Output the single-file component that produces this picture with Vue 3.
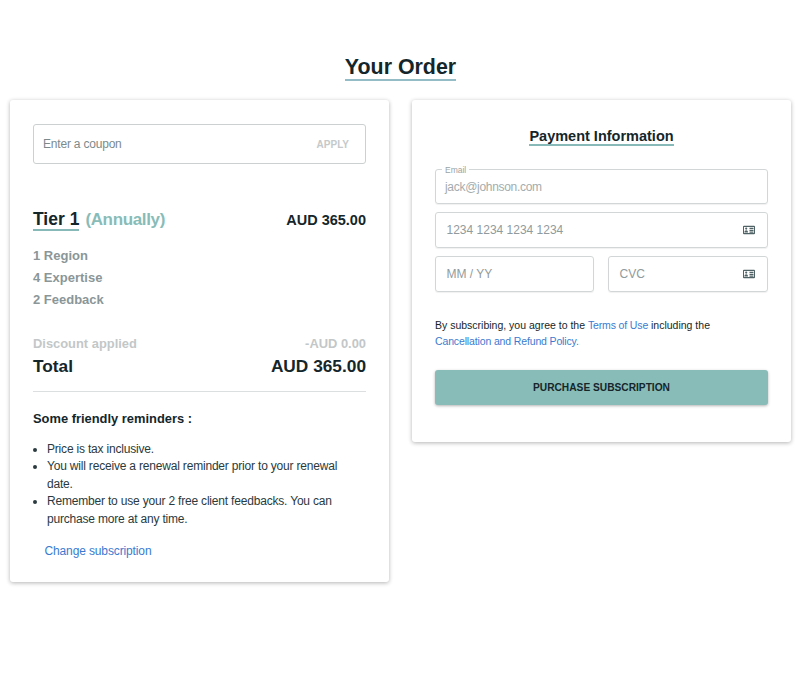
<script setup>
const items = ['1 Region', '4 Expertise', '2 Feedback']
</script>

<template>
  <main class="page">
    <h1 class="title"><span>Your Order</span></h1>
    <div class="columns">
      <section class="card left">
        <div class="coupon">
          <span class="coupon-ph">Enter a coupon</span>
          <span class="apply">APPLY</span>
        </div>
        <div class="tier-row">
          <div class="tier"><span class="tier-name">Tier 1</span> <span class="tier-period">(Annually)</span></div>
          <div class="tier-price">AUD 365.00</div>
        </div>
        <div class="features">
          <div v-for="i in items" :key="i" class="feature">{{ i }}</div>
        </div>
        <div class="discount"><span>Discount applied</span><span>-AUD 0.00</span></div>
        <div class="total"><span>Total</span><span>AUD 365.00</span></div>
        <hr class="rule" />
        <h3 class="rem-title">Some friendly reminders :</h3>
        <ul class="rem-list">
          <li>Price is tax inclusive.</li>
          <li>You will receive a renewal reminder prior to your renewal date.</li>
          <li>Remember to use your 2 free client feedbacks. You can purchase more at any time.</li>
        </ul>
        <a class="change">Change subscription</a>
      </section>

      <section class="card right">
        <h2 class="pay-title"><span>Payment Information</span></h2>
        <div class="field email">
          <span class="legend">Email</span>
          <span class="email-ph">jack@johnson.com</span>
        </div>
        <div class="field stripe">
          <span>1234 1234 1234 1234</span>
          <svg class="card-icon" viewBox="0 0 12 10" width="12" height="10"><path fill="#4f6265" fill-rule="evenodd" d="M1 .8h10a1 1 0 0 1 1 1v6.400a1 1 0 0 1-1 1H1a1 1 0 0 1-1-1V1.800a1 1 0 0 1 1-1zm0 1.200v6h10V2zm5.500.8h4v1.200h-4zm0 1.900h4v1.200h-4zm0 1.900h4V7.700h-4zM3.200 2.500a1.100 1.100 0 1 1 0 2.200 1.100 1.100 0 0 1 0-2.200zM1.400 7.500c0-1.300.8-2.200 1.800-2.200s1.800.9 1.800 2.200z"/></svg>
        </div>
        <div class="split">
          <div class="field stripe"><span>MM / YY</span></div>
          <div class="field stripe">
            <span>CVC</span>
            <svg class="card-icon" viewBox="0 0 12 10" width="12" height="10"><path fill="#4f6265" fill-rule="evenodd" d="M1 .8h10a1 1 0 0 1 1 1v6.400a1 1 0 0 1-1 1H1a1 1 0 0 1-1-1V1.800a1 1 0 0 1 1-1zm0 1.200v6h10V2zm5.500.8h4v1.200h-4zm0 1.900h4v1.200h-4zm0 1.900h4V7.700h-4zM3.200 2.500a1.100 1.100 0 1 1 0 2.200 1.100 1.100 0 0 1 0-2.200zM1.400 7.500c0-1.300.8-2.200 1.800-2.200s1.800.9 1.800 2.200z"/></svg>
          </div>
        </div>
        <p class="terms">By subscribing, you agree to the <a>Terms of Use</a> including the <a>Cancellation and Refund Policy.</a></p>
        <button class="buy">PURCHASE SUBSCRIPTION</button>
      </section>
    </div>
  </main>
</template>

<style>
html, body { background: #fff; }
</style>

<style scoped>
.page {
  height: 673px;
  box-sizing: border-box;
  padding: 0 9px 0 10px;
  font-family: "Liberation Sans", Arial, sans-serif;
  color: #15262b;
  overflow: hidden;
}
.title {
  margin: 0;
  padding-top: 55px;
  height: 45px;
  text-align: center;
  font-size: 21.400px;
  line-height: 24px;
  font-weight: 700;
}
.title span {
  display: inline-block;
  border-bottom: 2.500px solid #93bcc6;
  line-height: 24px;
}
.columns {
  display: grid;
  grid-template-columns: 379px 379.500px;
  gap: 22.500px;
  align-items: start;
}
.card {
  background: #fff;
  border-radius: 3px;
  box-shadow: 0 1px 4px rgba(0, 0, 0, 0.3);
  box-sizing: border-box;
}
.left { height: 482px; padding: 24px 23px 0; }
.right { height: 342px; padding: 27px 23px 0 23.500px; }
.coupon {
  height: 40px;
  box-sizing: border-box;
  border: 1px solid #ccd0d1;
  border-radius: 3px;
  padding: 0 16px 0 9px;
  display: flex;
  align-items: center;
  justify-content: space-between;
}
.coupon-ph { font-size: 12px; letter-spacing: -0.2px; color: #7c8a8c; }
.apply { font-size: 10px; font-weight: 700; color: #c5c9ca; }
.tier-row {
  margin-top: 43px;
  display: flex;
  justify-content: space-between;
  align-items: center;
  height: 26px;
}
.tier { font-size: 17.500px; font-weight: 700; display: flex; align-items: baseline; gap: 6px; }
.tier-name { border-bottom: 2px solid #86b9b7; line-height: 19px; }
.tier-period { color: #88bcb8; font-size: 17px; letter-spacing: -0.35px; }
.tier-price { font-size: 14.500px; font-weight: 700; }
.features { margin-top: 12px; }
.feature { font-size: 13px; font-weight: 700; color: #8a9698; line-height: 22px; }
.discount {
  margin-top: 23px;
  display: flex;
  justify-content: space-between;
  font-size: 12.900px;
  font-weight: 700;
  color: #c3c7c8;
  line-height: 20px;
}
.total {
  display: flex;
  justify-content: space-between;
  font-size: 17.300px;
  font-weight: 700;
  line-height: 24px;
}
.rule { border: 0; border-top: 1px solid #dcdfdf; margin: 13px 0 0; }
.rem-title { margin: 18px 0 0; font-size: 12.900px; font-weight: 700; line-height: 18px; }
.rem-list {
  margin: 13px 0 0;
  padding-left: 14px;
  font-size: 12px;
  letter-spacing: -0.19px;
  line-height: 17.400px;
  color: #2a3a3e;
}
.change {
  display: block;
  margin: 13.500px 0 0 11.500px;
  font-size: 12px;
  letter-spacing: -0.13px;
  line-height: 18px;
  color: #3a7bd0;
}
.pay-title { margin: 1px 0 0; text-align: center; font-size: 14.500px; font-weight: 700; line-height: 16px; }
.pay-title span { display: inline-block; border-bottom: 2px solid #86b9b7; }
.field {
  box-sizing: border-box;
  border: 1px solid #d3d6d7;
  border-radius: 3px;
  box-shadow: 0 1px 1px rgba(0, 0, 0, 0.06);
}
.email {
  position: relative;
  margin-top: 23px;
  height: 35px;
  padding: 9px 9px 0;
  font-size: 12px;
  letter-spacing: -0.3px;
  line-height: 16px;
  color: #a4acad;
}
.legend {
  position: absolute;
  left: 6px;
  top: -5px;
  padding: 0 3px;
  background: #fff;
  font-size: 8.500px;
  letter-spacing: 0;
  line-height: 10px;
  color: #9aa3a4;
}
.stripe {
  height: 36px;
  display: flex;
  align-items: center;
  justify-content: space-between;
  padding: 0 12px 0 10.500px;
  font-size: 12px;
  color: #909b9d;
}
.email + .stripe { margin-top: 8px; }
.split {
  margin-top: 8px;
  display: grid;
  grid-template-columns: 159px 160px;
  justify-content: space-between;
}
.card-icon { flex: none; }
.terms {
  margin: 25px 0 0;
  font-size: 10.500px;
  line-height: 16px;
  color: #15262b;
}
.terms a { color: #3a7bd0; letter-spacing: -0.14px; }
.buy {
  display: block;
  width: 100%;
  height: 35px;
  margin-top: 21px;
  padding-bottom: 2px;
  border: 0;
  border-radius: 3px;
  background: #88bcb8;
  box-shadow: 0 1px 3px rgba(0, 0, 0, 0.3);
  font-family: inherit;
  font-size: 10.200px;
  font-weight: 700;
  color: #15262b;
}
</style>
